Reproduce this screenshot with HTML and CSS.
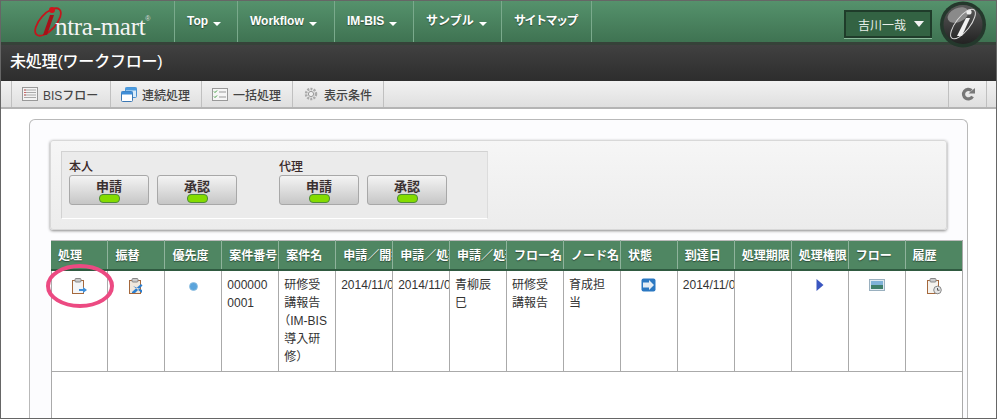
FILE: index.html
```html
<!DOCTYPE html>
<html lang="ja">
<head>
    <meta charset="UTF-8">
    <title>未処理(ワークフロー)</title>
    <link rel="stylesheet" href="styles.css">
</head>
<body>
<div class="page">

    <!-- Global nav -->
    <div class="nav">
        <div class="logo">
            <svg class="logo-swoosh" width="36" height="36" viewBox="0 0 36 36">
                <ellipse cx="16" cy="18" rx="8" ry="17" transform="rotate(42 16 18)" fill="none" stroke="#c4161c" stroke-width="1.8"/>
                <circle cx="20" cy="6" r="3" fill="#d3131b"/>
                <path d="M18 11 L22 11 L15 31 L11 31 Z" fill="#a51218"/>
            </svg>
            <span class="logo-text">ntra-mart</span><span class="logo-mark">®</span>
        </div>
        <a class="nav-item nav-top">Top<i class="caret"></i></a>
        <a class="nav-item nav-workflow">Workflow<i class="caret"></i></a>
        <a class="nav-item nav-bis">IM-BIS<i class="caret"></i></a>
        <a class="nav-item nav-sample">サンプル<i class="caret"></i></a>
        <a class="nav-item nav-sitemap">サイトマップ</a>
        <div class="user-box">吉川一哉<i class="caret-user"></i></div>
    </div>

    <div class="title-bar">未処理(ワークフロー)</div>

    <svg class="badge" width="48" height="47" viewBox="0 0 48 47">
        <defs>
            <linearGradient id="badgeFill" x1="0" y1="0" x2="0" y2="1">
                <stop offset="0" stop-color="#5a5a5a"/>
                <stop offset="1" stop-color="#222"/>
            </linearGradient>
        </defs>
        <circle cx="24" cy="23.5" r="23" fill="#24382c"/>
        <circle cx="24" cy="23.5" r="19.5" fill="url(#badgeFill)"/>
        <ellipse cx="19" cy="14" rx="11" ry="7" fill="#8a8a8a" transform="rotate(-25 19 14)"/>
        <circle cx="30" cy="11" r="2.6" fill="#eee"/>
        <path d="M27 17 L31 17 L23 35 L18 35 Z" fill="#f2f2f2"/>
        <ellipse cx="24" cy="23" rx="7" ry="18" transform="rotate(38 24 23)" fill="none" stroke="#ddd" stroke-width="1"/>
    </svg>

    <!-- Toolbar -->
    <div class="toolbar">
        <a class="tool tool-first">
            <svg width="16" height="14" viewBox="0 0 16 14"><rect x=".5" y=".5" width="15" height="13" fill="#f4f4f4" stroke="#999"/><path d="M2 3h12M2 5.500h12M2 8h12M2 10.500h12" stroke="#aaa"/><path d="M2 3h2M2 5.500h2M2 8h2" stroke="#c66"/></svg>
            BISフロー
        </a>
        <a class="tool">
            <svg width="16" height="15" viewBox="0 0 16 15"><rect x="4.500" y=".5" width="11" height="10" rx="1" fill="#d8ebfa" stroke="#4a90d0"/><rect x="4.500" y=".5" width="11" height="3" fill="#4a9be0"/><rect x=".5" y="4.500" width="11" height="10" rx="1" fill="#fff" stroke="#3c78b4"/><rect x=".5" y="4.500" width="11" height="3" fill="#3f8ed8"/></svg>
            連続処理
        </a>
        <a class="tool">
            <svg width="16" height="13" viewBox="0 0 16 13"><rect x=".5" y=".5" width="15" height="12" fill="#f6f6f6" stroke="#999"/><path d="M2 3.500l1 1 2-2M2 8.500l1 1 2-2" fill="none" stroke="#3a9a3a"/><path d="M7 4h7M7 9h7" stroke="#999"/></svg>
            一括処理
        </a>
        <a class="tool tool-cond">
            <svg width="14" height="14" viewBox="0 0 14 14"><circle cx="7" cy="7" r="5" fill="none" stroke="#aaa" stroke-width="2.500" stroke-dasharray="2 1.200"/><circle cx="7" cy="7" r="2.600" fill="#f0f0f0" stroke="#999"/></svg>
            表示条件
        </a>
        <a class="tool-refresh">
            <svg width="14" height="14" viewBox="0 0 14 14"><path d="M11.500 9.500A4.800 4.800 0 1 1 10.500 3.500" fill="none" stroke="#777" stroke-width="3.200"/><path d="M7.500 6.500h6.500V1z" fill="#777"/></svg>
        </a>
    </div>

    <div class="content">
        <div class="panel">

            <!-- Filter buttons -->
            <div class="filter">
                <div class="filter-inner">
                    <div class="filter-group">
                        <div class="filter-label">本人</div>
                        <div class="filter-buttons">
                            <a class="lamp-button">申請<i class="lamp"></i></a>
                            <a class="lamp-button">承認<i class="lamp"></i></a>
                        </div>
                    </div>
                    <div class="filter-group">
                        <div class="filter-label">代理</div>
                        <div class="filter-buttons">
                            <a class="lamp-button">申請<i class="lamp"></i></a>
                            <a class="lamp-button">承認<i class="lamp"></i></a>
                        </div>
                    </div>
                </div>
            </div>

            <!-- List -->
            <div class="grid-wrap">
                <table class="grid">
                    <thead>
                        <tr>
                            <th><div>処理</div></th>
                            <th><div>振替</div></th>
                            <th><div>優先度</div></th>
                            <th><div>案件番号</div></th>
                            <th><div>案件名</div></th>
                            <th><div>申請／開始日</div></th>
                            <th><div>申請／処理日</div></th>
                            <th><div>申請／処理者</div></th>
                            <th><div>フロー名</div></th>
                            <th><div>ノード名</div></th>
                            <th><div>状態</div></th>
                            <th><div>到達日</div></th>
                            <th><div>処理期限</div></th>
                            <th><div>処理権限</div></th>
                            <th><div>フロー</div></th>
                            <th><div>履歴</div></th>
                        </tr>
                    </thead>
                    <tbody>
                        <tr>
                            <td class="icon-cell">
                                <svg width="16" height="17" viewBox="0 0 16 17"><rect x="1.500" y="2.500" width="11" height="13" fill="#f4f6f8" stroke="#a5683c"/><rect x="4" y=".5" width="6" height="3.500" rx="1" fill="#ccc" stroke="#888"/><path d="M8 11h4V9l4 3-4 3v-2H8z" fill="#3d8fdb"/></svg>
                            </td>
                            <td class="icon-cell">
                                <svg width="16" height="17" viewBox="0 0 16 17"><rect x="1.500" y="2.500" width="11" height="13" fill="#f0e8dc" stroke="#a5683c"/><rect x="4" y=".5" width="6" height="3.500" rx="1" fill="#ccc" stroke="#888"/><path d="M4 14L13 6l1.500 1.500L7 15H4zM5 8l9 7v-3z" fill="#2c7fd0"/></svg>
                            </td>
                            <td class="icon-cell">
                                <svg width="9" height="9" viewBox="0 0 9 9"><circle cx="4.500" cy="4.500" r="4" fill="#5aa4dc" stroke="#8fbfe0" stroke-width=".8"/></svg>
                            </td>
                            <td>0000000001</td>
                            <td>研修受講報告<br><span class="tight">（</span>IM-BIS<br>導入研修<span class="tight">）</span></td>
                            <td class="nowrap">2014/11/05</td>
                            <td class="nowrap">2014/11/05</td>
                            <td>青柳辰巳</td>
                            <td>研修受講報告</td>
                            <td>育成担当</td>
                            <td class="icon-cell">
                                <svg width="15" height="14" viewBox="0 0 15 14"><rect x=".5" y=".5" width="14" height="13" rx="2" fill="#2b78c2"/><path d="M2 4.500h6V2l5 5-5 5V9.500H2z" fill="#e4edf5"/></svg>
                            </td>
                            <td class="nowrap">2014/11/05</td>
                            <td></td>
                            <td class="icon-cell">
                                <svg width="8" height="14" viewBox="0 0 8 14"><path d="M.5 1L7.500 7 .5 13z" fill="#3a56c0"/></svg>
                            </td>
                            <td class="icon-cell">
                                <svg width="16" height="12" viewBox="0 0 16 12"><rect x=".5" y=".5" width="15" height="11" fill="#dfeaf2" stroke="#9ab0bf"/><rect x="2" y="2" width="12" height="4" fill="#7fb2d8"/><rect x="2" y="6" width="12" height="4" fill="#3f7f6a"/></svg>
                            </td>
                            <td class="icon-cell">
                                <svg width="16" height="17" viewBox="0 0 16 17"><rect x="1.500" y="2.500" width="11" height="13" fill="#f6f3ee" stroke="#a5683c"/><rect x="4" y=".5" width="6" height="3.500" rx="1" fill="#ccc" stroke="#888"/><circle cx="11.500" cy="12" r="3.800" fill="#e6e6e6" stroke="#888"/><path d="M11.500 10v2.200h2" fill="none" stroke="#555"/></svg>
                            </td>
                        </tr>
                    </tbody>
                </table>
            </div>
        </div>
    </div>

    <!-- Marker drawn over the first icon -->
    <svg class="marker" width="68" height="44" viewBox="0 0 68 44">
        <ellipse cx="34" cy="22" rx="32" ry="20" fill="none" stroke="#ec4a82" stroke-width="4"/>
    </svg>
</div>
</body>
</html>
```

FILE: styles.css
```css
* {
    box-sizing: border-box;
    margin: 0;
    padding: 0;
}

html, body {
    height: 100%;
    overflow: hidden;
}

body {
    font-family: "Liberation Sans", "Noto Sans CJK JP", sans-serif;
    font-size: 12px;
    color: #333;
}

.page {
    position: relative;
    display: flex;
    flex-direction: column;
    height: 419px;
    border: 1px solid #666;
    overflow: hidden;
    background-color: #fff;
}

/* nav */
.nav {
    display: flex;
    flex: none;
    height: 44px;
    background: linear-gradient(#55926c, #3f7352);
    border-bottom: 3px solid #364239;
    color: #fff;
}

.logo {
    display: flex;
    width: 174px;
    flex: none;
    padding-left: 31px;
    border-right: 1px solid #7aaa8c;
}

.logo-swoosh {
    flex: none;
    margin-top: 3px;
}

.logo-text {
    font-family: "Liberation Serif", serif;
    font-size: 25px;
    line-height: 30px;
    height: 30px;
    margin: 11px 0 0 -13px;
    letter-spacing: -.3px;
    color: #f4f4f4;
}

.logo-mark {
    font-size: 7px;
    line-height: 10px;
    margin-top: 13px;
    color: #ddd;
}

.nav-item {
    flex: none;
    padding: 13px 0 0 12px;
    font-weight: bold;
    font-size: 12px;
    line-height: 15px;
    border-right: 1px solid #7aaa8c;
    text-shadow: 0 1px 1px #2c4a38;
}

.nav-top { width: 63px; }
.nav-workflow { width: 97px; }
.nav-bis { width: 79px; }
.nav-sample { width: 88px; }

.nav-sitemap {
    width: 90px;
    letter-spacing: -1.5px;
}

.caret {
    display: inline-block;
    margin-left: 5px;
    vertical-align: -1px;
    border-top: 4px solid #fff;
    border-left: 4px solid transparent;
    border-right: 4px solid transparent;
}

.user-box {
    display: flex;
    align-items: center;
    justify-content: space-between;
    width: 88px;
    height: 28px;
    margin: 9px 0 0 252px;
    padding: 0 6px 0 12px;
    background-color: #336343;
    border: 2px solid #1f3c2a;
    font-size: 12px;
    color: #e8efe9;
    box-shadow: 0 1px 0 #8ab89a;
}

.caret-user {
    border-top: 6px solid #f2f2f2;
    border-left: 5px solid transparent;
    border-right: 5px solid transparent;
}

.title-bar {
    flex: none;
    height: 36px;
    padding: 6px 0 0 9px;
    background: linear-gradient(#414141, #2d2d2d);
    color: #fff;
    font-size: 16px;
    line-height: 22px;
    letter-spacing: -.2px;
    font-weight: 500;
}

.badge {
    position: absolute;
    top: 0;
    left: 938px;
}

/* toolbar */
.toolbar {
    display: flex;
    flex: none;
    height: 28px;
    padding-left: 10px;
    background: linear-gradient(#f2f2f2, #dfdfdf);
    border-bottom: 2px solid #b4b4b4;
}

.tool {
    display: flex;
    align-items: center;
    gap: 5px;
    width: 91px;
    padding-left: 10px;
    border-right: 1px solid #c0c0c0;
    font-size: 12px;
    font-weight: 500;
    color: #444;
}

.tool-first {
    width: 100px;
    border-left: 1px solid #c0c0c0;
}

.tool-cond {
    gap: 6px;
    padding-left: 11px;
}

.tool-refresh {
    display: flex;
    align-items: center;
    justify-content: center;
    width: 39px;
    margin: 0 9px 0 auto;
    border-left: 1px solid #c0c0c0;
    border-right: 1px solid #c0c0c0;
}

/* content */
.content {
    flex: 1;
    min-height: 0;
    padding: 10px 28px 0;
    background-color: #fff;
}

.panel {
    height: 100%;
    padding: 20px 5px 0 20px;
    background-color: #fcfcfe;
    border: 1px solid #b9b9b9;
    border-bottom: none;
    border-radius: 6px 6px 0 0;
}

.filter {
    width: 897px;
    height: 90px;
    padding: 10px 0 0 10px;
    background: linear-gradient(#f6f6f6, #ececec);
    border: 1px solid #d8d8d8;
    border-radius: 3px;
    box-shadow: 0 1px 3px #888;
}

.filter-inner {
    display: flex;
    gap: 42px;
    width: 427px;
    height: 68px;
    padding: 7px 0 0 7px;
    background-color: #ebebeb;
    border: 1px solid #d2d2d2;
    border-bottom-color: #fff;
    border-right-color: #dcdcdc;
}

.filter-label {
    height: 16px;
    line-height: 17px;
    font-size: 12px;
    color: #3a2a2a;
    font-weight: 500;
}

.filter-buttons {
    display: flex;
    gap: 8px;
}

.lamp-button {
    display: flex;
    flex-direction: column;
    align-items: center;
    width: 80px;
    height: 30px;
    padding-top: 3px;
    background: linear-gradient(#f4f4f4, #c6c6c6);
    border: 1px solid #a8a8a8;
    border-radius: 3px;
    font-size: 13px;
    font-weight: bold;
    line-height: 15px;
    color: #3a3030;
}

.lamp {
    width: 21px;
    height: 9px;
    background-color: #84dc00;
    border: 1px solid #4f8a3a;
    border-radius: 4px;
}

.grid-wrap {
    width: 912px;
    height: 178px;
    margin: 10px 0 0 1px;
    border-left: 1px solid #aaa;
    border-right: 1px solid #aaa;
    background-color: #fff;
}

.grid {
    width: 911px;
    margin-left: -1px;
    table-layout: fixed;
    border-collapse: collapse;
}

.grid th {
    height: 29px;
    padding: 0 0 1px;
    background-color: #4f8662;
    border-top: 1px solid #bbb;
    border-bottom: 2px solid #2f5a40;
    border-right: 1px solid #8fb39c;
    color: #fff;
    font-size: 12px;
    font-weight: bold;
    text-align: left;
    text-shadow: 0 1px 1px #2c4a38;
}

.grid th div {
    padding-left: 7px;
    white-space: nowrap;
    overflow: hidden;
}

.grid td {
    height: 101px;
    padding: 5px;
    vertical-align: top;
    border-right: 1px solid #aaa;
    border-bottom: 1px solid #aaa;
    line-height: 18px;
    font-size: 12px;
    word-break: break-all;
    overflow: hidden;
}

.grid td:last-child, .grid th:last-child {
    border-right: none;
}

.grid td.nowrap {
    white-space: nowrap;
}

.grid td.icon-cell {
    padding-top: 7px;
    text-align: center;
}

.tight {
    font-feature-settings: "halt";
}

.marker {
    position: absolute;
    top: 263px;
    left: 45px;
}
```
